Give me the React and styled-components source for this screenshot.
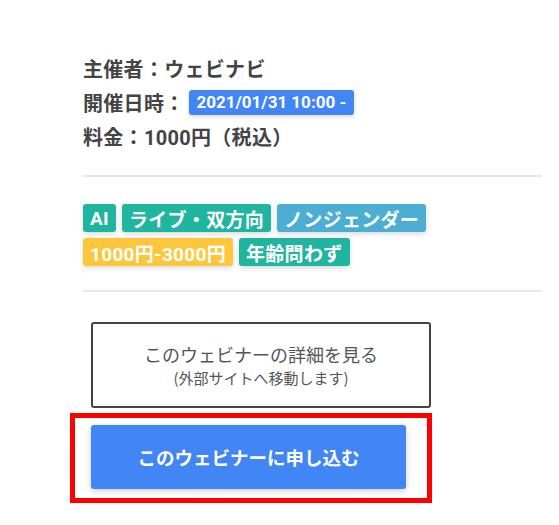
import React from "react";
import styled, { createGlobalStyle } from "styled-components";

const GlobalStyle = createGlobalStyle`
  html, body {
    margin: 0;
    padding: 0;
    background: #fff;
  }
  body {
    font-family: "Roboto", "Noto Sans CJK JP", sans-serif;
    color: #444;
  }
`;

const tags = [
  [
    { label: "AI", color: "#1fb59f" },
    { label: "ライブ・双方向", color: "#1fb59f" },
    { label: "ノンジェンダー", color: "#4caed2" },
  ],
  [
    { label: "1000円-3000円", color: "#fdc73d" },
    { label: "年齢問わず", color: "#1fb59f" },
  ],
];

const App = () => {
  return (
    <Page>
      <GlobalStyle />
      <Info>
        <InfoRow>主催者：ウェビナビ</InfoRow>
        <InfoRow>
          開催日時：<DateBadge>2021/01/31 10:00 -</DateBadge>
        </InfoRow>
        <InfoRow>料金：1000円（税込）</InfoRow>
      </Info>
      <Divider />
      <Tags>
        {tags.map((row, i) => (
          <TagRow key={i}>
            {row.map((t) => (
              <Tag key={t.label} color={t.color}>
                {t.label}
              </Tag>
            ))}
          </TagRow>
        ))}
      </Tags>
      <Divider />
      <Actions>
        <DetailButton>
          <DetailTitle>このウェビナーの詳細を見る</DetailTitle>
          <DetailSub>(外部サイトへ移動します)</DetailSub>
        </DetailButton>
        <Highlight>
          <ApplyButton>このウェビナーに申し込む</ApplyButton>
        </Highlight>
      </Actions>
    </Page>
  );
};

const Page = styled.div`
  width: 459px;
  padding: 51px 0 0 83px;
`;

const Info = styled.div`
  display: flex;
  flex-direction: column;
  margin-bottom: 22px;
`;

const InfoRow = styled.div`
  display: flex;
  align-items: center;
  height: 34px;
  font-family: "Roboto", "Noto Sans CJK JP", sans-serif;
  font-size: 20px;
  font-weight: 700;
  letter-spacing: 0.3px;
  color: #444;
`;

const DateBadge = styled.span`
  display: inline-flex;
  align-items: center;
  height: 25px;
  margin-left: 4px;
  padding: 0 8px;
  border-radius: 3px;
  background: #4285f4;
  color: #fff;
  font-size: 17px;
  font-weight: 700;
  letter-spacing: 0;
  box-shadow: 0 2px 4px rgba(0, 0, 0, 0.15);
`;

const Divider = styled.hr`
  margin: 0;
  border: none;
  border-top: 2px solid #e8e8e8;
`;

const Tags = styled.div`
  display: flex;
  flex-direction: column;
  gap: 6px;
  margin: 27px 0 24px;
`;

const TagRow = styled.div`
  display: flex;
  gap: 6px;
`;

const Tag = styled.span`
  display: inline-flex;
  align-items: center;
  height: 28px;
  padding: 0 7px;
  border-radius: 3px;
  background: ${(p) => p.color};
  color: #fff;
  font-size: 19px;
  font-weight: 700;
  letter-spacing: 0.3px;
  box-shadow: 0 2px 5px rgba(0, 0, 0, 0.15);
`;

const Actions = styled.div`
  display: flex;
  flex-direction: column;
  align-items: flex-start;
  padding: 30px 0 0 8px;
`;

const DetailButton = styled.div`
  box-sizing: border-box;
  width: 340px;
  height: 86px;
  display: flex;
  flex-direction: column;
  align-items: center;
  justify-content: center;
  border: 2px solid #444;
  border-radius: 3px;
  background: #fff;
  font-family: "Noto Sans CJK JP", sans-serif;
  color: #555;
`;

const DetailTitle = styled.div`
  font-size: 18px;
  line-height: 26px;
  font-weight: 400;
`;

const DetailSub = styled.div`
  font-size: 15px;
  line-height: 22px;
  font-weight: 400;
`;

const Highlight = styled.div`
  box-sizing: border-box;
  width: 362px;
  margin: 5px 0 0 -21px;
  padding: 7px 21px 9px 16px;
  border: 5px solid #ff0000;
`;

const ApplyButton = styled.div`
  height: 64px;
  display: flex;
  align-items: center;
  justify-content: center;
  border-radius: 3px;
  background: #4285f4;
  color: #fff;
  font-family: "Noto Sans CJK JP", sans-serif;
  font-size: 18.5px;
  font-weight: 700;
  box-shadow: 0 2px 6px rgba(0, 0, 0, 0.2);
`;

export default App;
